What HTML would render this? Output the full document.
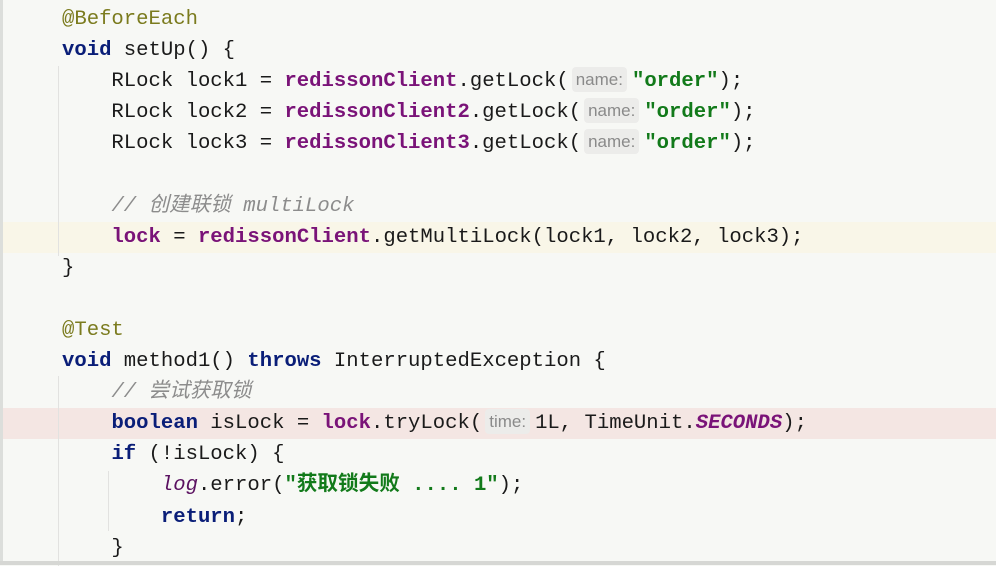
<!DOCTYPE html>
<html><head><meta charset="utf-8"><style>
body{margin:0;width:996px;height:565px;overflow:hidden;background:#f7f8f5;position:relative}
.code{position:absolute;left:62px;top:4px;font-family:"Liberation Mono","Noto Sans CJK SC",monospace;font-size:20.6px;line-height:31.1px;color:#1a1a1a;white-space:pre}
.l{height:31.1px}
.k{color:#0a1e78;font-weight:bold}
.a{color:#7b7b1e}
.f{color:#7a1378;font-weight:bold}
.s{color:#127a1a;font-weight:bold}
.c{color:#8c8c8c;font-style:italic}
.i{font-style:italic}
.h{display:inline-block;font-family:"Liberation Sans",sans-serif;font-size:17px;color:#8a8a8a;background:#ececea;border-radius:4px;padding:0 4px;margin:0 5px 0 3px;line-height:25px;vertical-align:1px}
.hl1{position:absolute;left:0;top:222px;width:996px;height:31px;background:#f9f6e8}
.hl2{position:absolute;left:0;top:408px;width:996px;height:31px;background:#f4e6e3}
.gut{position:absolute;left:0;top:0;width:3px;height:565px;background:#dcdedb}
.ind{position:absolute;width:1px;background:#e2e2e0}
.bot{position:absolute;left:0;top:561px;width:996px;height:4px;background:#d6d7d4}
</style></head><body>
<div class="hl1"></div><div class="hl2"></div>
<div class="gut"></div>
<div class="ind" style="left:58px;top:66px;height:190px"></div>
<div class="ind" style="left:58px;top:376px;height:190px"></div>
<div class="ind" style="left:108px;top:471px;height:60px"></div>
<div class="code"><div class="l"><span class="a">@BeforeEach</span></div><div class="l"><span class="k">void</span> setUp() {</div><div class="l">    RLock lock1 = <span class="f">redissonClient</span>.getLock(<span class="h">name:</span><span class="s">"order"</span>);</div><div class="l">    RLock lock2 = <span class="f">redissonClient2</span>.getLock(<span class="h">name:</span><span class="s">"order"</span>);</div><div class="l">    RLock lock3 = <span class="f">redissonClient3</span>.getLock(<span class="h">name:</span><span class="s">"order"</span>);</div><div class="l"> </div><div class="l">    <span class="c">// 创建联锁 multiLock</span></div><div class="l">    <span class="f">lock</span> = <span class="f">redissonClient</span>.getMultiLock(lock1, lock2, lock3);</div><div class="l">}</div><div class="l"> </div><div class="l"><span class="a">@Test</span></div><div class="l"><span class="k">void</span> method1() <span class="k">throws</span> InterruptedException {</div><div class="l">    <span class="c">// 尝试获取锁</span></div><div class="l">    <span class="k">boolean</span> isLock = <span class="f">lock</span>.tryLock(<span class="h">time:</span>1L, TimeUnit.<span class="f i">SECONDS</span>);</div><div class="l">    <span class="k">if</span> (!isLock) {</div><div class="l">        <span class="f i" style="font-weight:normal;color:#5a1060">log</span>.error(<span class="s">"获取锁失败 .... 1"</span>);</div><div class="l">        <span class="k">return</span>;</div><div class="l">    }</div></div>
<div class="bot"></div>
</body></html>
